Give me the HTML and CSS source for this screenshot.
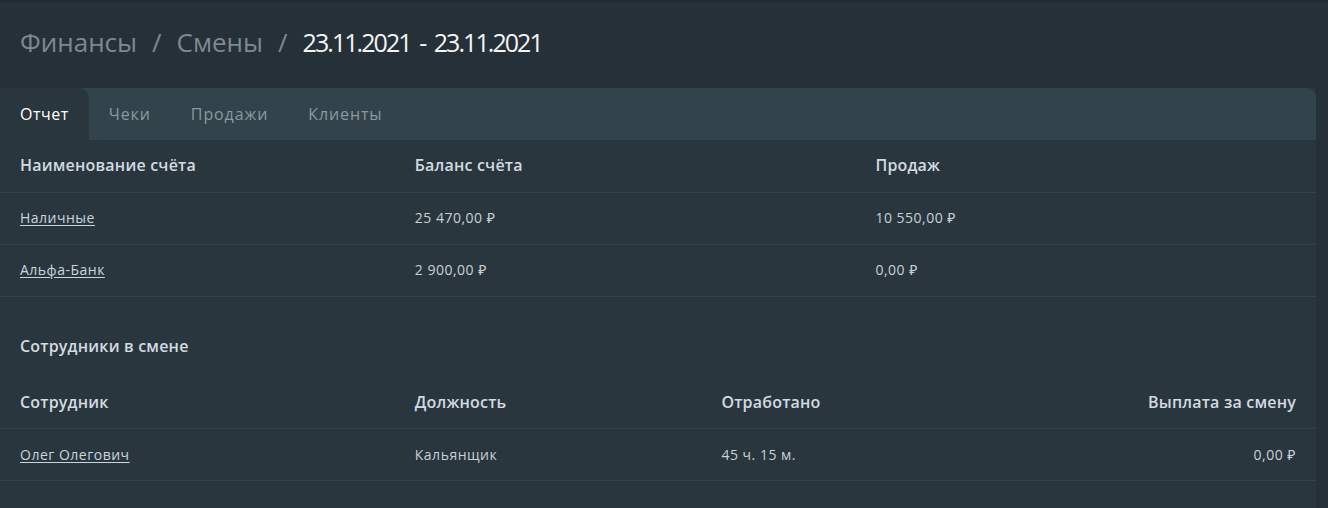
FILE: index.html
```html
<!DOCTYPE html>
<html lang="ru">
<head>
<meta charset="utf-8">
<title>Смены</title>
<link rel="stylesheet" href="styles.css">
</head>
<body>
<div class="page">
  <h1 class="crumbs">
    <span class="crumb">Финансы</span><span class="sep">/</span><span class="crumb">Смены</span><span class="sep">/</span><span class="current">23.11.2021 - 23.11.2021</span>
  </h1>
  <div class="card">
    <div class="tabs">
      <div class="tab active">Отчет</div>
      <div class="tab-rest">
        <div class="tab">Чеки</div>
        <div class="tab">Продажи</div>
        <div class="tab">Клиенты</div>
      </div>
    </div>
    <table class="grid">
      <colgroup><col class="c1"><col class="c2"><col></colgroup>
      <thead>
        <tr><th>Наименование счёта</th><th>Баланс счёта</th><th>Продаж</th></tr>
      </thead>
      <tbody>
        <tr><td><a href="#">Наличные</a></td><td>25 470,00 ₽</td><td>10 550,00 ₽</td></tr>
        <tr><td><a href="#">Альфа-Банк</a></td><td>2 900,00 ₽</td><td>0,00 ₽</td></tr>
      </tbody>
    </table>
    <h2 class="section-title">Сотрудники в смене</h2>
    <table class="grid">
      <colgroup><col class="c1"><col class="c2b"><col><col></colgroup>
      <thead>
        <tr><th>Сотрудник</th><th>Должность</th><th>Отработано</th><th class="right">Выплата за смену</th></tr>
      </thead>
      <tbody>
        <tr><td><a href="#">Олег Олегович</a></td><td>Кальянщик</td><td>45 ч. 15 м.</td><td class="right">0,00 ₽</td></tr>
      </tbody>
    </table>
  </div>
</div>
</body>
</html>
```
FILE: styles.css
```css
html, body {
  margin: 0;
  padding: 0;
  background: #263038;
  height: 100%;
}
body {
  font-family: "Open Sans", "Noto Sans", sans-serif;
  color: #c5ced3;
  border-top: 2px solid #222b32;
  box-sizing: border-box;
}
.page {
  padding-right: 12px;
}
.crumbs {
  margin: 0;
  padding: 20px 20px 0;
  height: 60px;
  box-sizing: border-box;
  font-size: 26px;
  font-weight: 400;
  line-height: 34px;
  display: flex;
  align-items: center;
  white-space: nowrap;
}
.crumb { color: #7c8992; }
.sep { color: #7c8992; margin: 0 15px; }
.current {
  color: #f3f5f6;
  font-size: 25px;
  letter-spacing: -1.95px;
  word-spacing: 4px;
}
.card {
  margin-top: 26px;
  background: #2a363e;
  min-height: 420px;
}
.tabs {
  display: flex;
  height: 52px;
  background: #33434b;
  border-radius: 10px 10px 0 0;
}
.tab {
  padding: 0 20px;
  display: flex;
  align-items: center;
  font-size: 16px;
  font-weight: 500;
  letter-spacing: 0.9px;
  color: #8b989f;
}
.tab.active {
  background: #2a363e;
  color: #ffffff;
  letter-spacing: 0.5px;
  border-radius: 10px 10px 0 0;
}
.tab-rest {
  flex: 1;
  display: flex;
  background: #33434b;
  border-radius: 0 10px 0 12px;
}
.grid {
  width: 100%;
  border-collapse: collapse;
  table-layout: fixed;
}
.c1 { width: 30%; }
.c2 { width: 35%; }
.c2b { width: 23.3%; }
.grid th, .grid td {
  height: 52px;
  padding: 0 20px 1px;
  text-align: left;
  border-bottom: 1px solid #33434b;
  box-sizing: border-box;
  vertical-align: middle;
}
.grid th {
  font-size: 16px;
  font-weight: 600;
  letter-spacing: 0.2px;
  color: #d3dbe0;
}
.grid td {
  font-size: 14px;
  font-weight: 400;
  letter-spacing: 0.5px;
  color: #c8d1d6;
}
.grid .right { text-align: right; }
.grid a {
  color: #c8d5de;
  text-decoration: underline;
  text-underline-offset: 2px;
}
.section-title {
  margin: 0;
  padding: 39px 20px 0;
  height: 80px;
  box-sizing: border-box;
  font-size: 16px;
  font-weight: 600;
  letter-spacing: 0.2px;
  line-height: 20px;
  color: #d3dbe0;
}
```
